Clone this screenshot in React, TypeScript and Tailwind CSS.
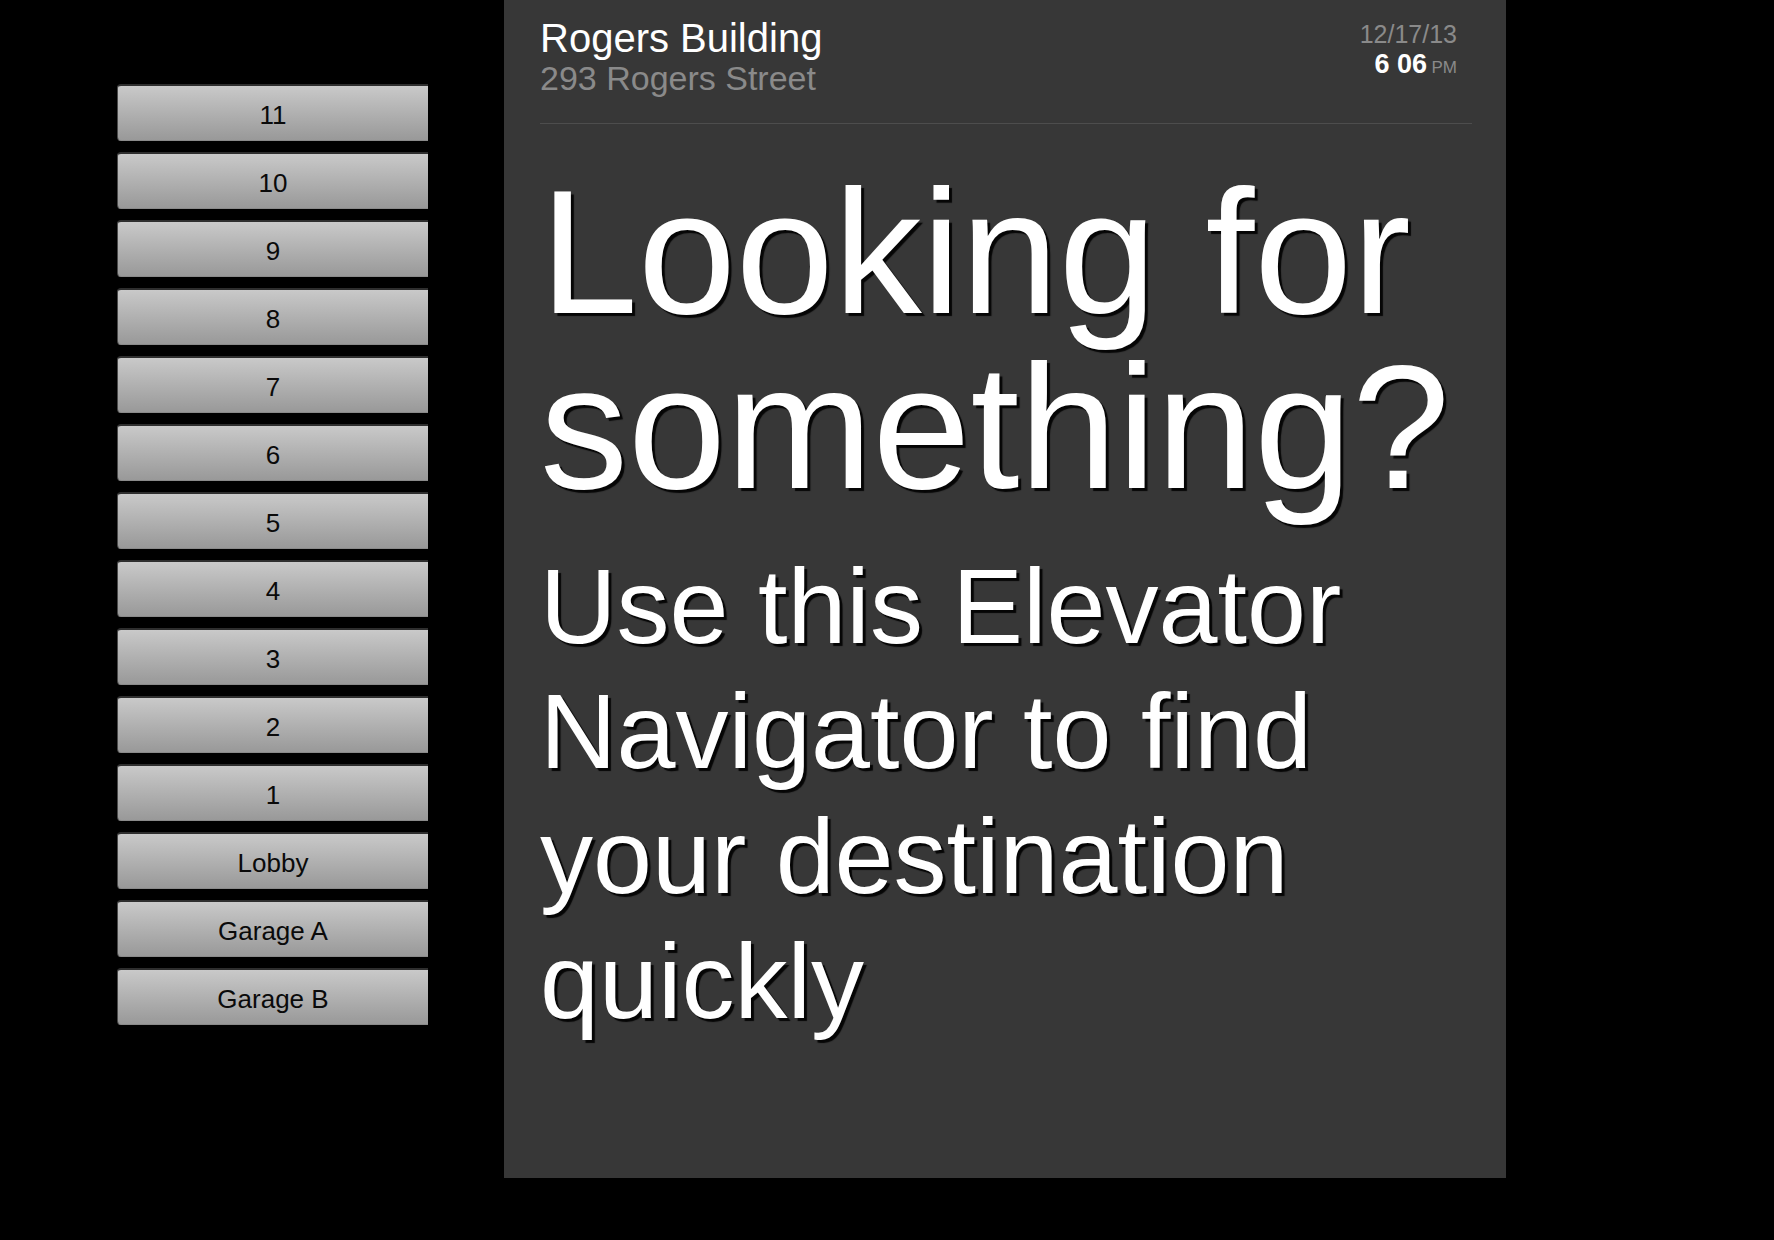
import React from "react";

const floors = ["11", "10", "9", "8", "7", "6", "5", "4", "3", "2", "1", "Lobby", "Garage A", "Garage B"];

const FloorButton: React.FC<{ label: string }> = ({ label }) => {
  return (
    <button className="flex h-[57px] w-[320px] items-center justify-center rounded-l-[4px] border-t-2 border-l border-b border-t-[#2e2e2e] border-l-[#4a4a4a] border-b-[#8a8a8a] bg-gradient-to-b from-[#c9c9c9] to-[#999999] pt-[4px] pr-[9px] text-[26px] text-[#0a0a0a] [font-family:'Liberation_Sans',Arial,sans-serif]">
      {label}
    </button>
  );
};

const App: React.FC = () => {
  return (
    <div className="flex h-[1240px] w-[1774px] overflow-hidden bg-black [font-family:'Liberation_Sans',Arial,sans-serif]">
      {/* Floor buttons */}
      <div className="ml-[117px] mt-[84px] flex w-[311px] flex-col gap-[11px] self-start overflow-hidden">
        {floors.map((f) => (
          <FloorButton key={f} label={f} />
        ))}
      </div>

      {/* Main panel */}
      <div className="ml-[76px] h-[1178px] w-[1002px] bg-[#373737] pl-[36px] pr-[34px]">
        {/* Header */}
        <div className="flex items-start justify-between border-b border-[#4d4d4d] pb-[26px]">
          <div className="pt-[16px]">
            <div className="text-[40px] leading-[44px] text-white">Rogers Building</div>
            <div className="text-[34px] leading-[37px] text-[#8a8a8a]">293 Rogers Street</div>
          </div>
          <div className="mr-[15px] pt-[20px] text-right">
            <div className="text-[25px] leading-[29px] text-[#8a8a8a]">12/17/13</div>
            <div className="leading-[30px]">
              <span className="text-[27px] font-semibold text-white">6 06</span>{" "}
              <span className="text-[17px] text-[#8a8a8a]">PM</span>
            </div>
          </div>
        </div>

        {/* Headline */}
        <h1 className="mt-[41px] text-[176px] leading-[175px] text-white [text-shadow:3px_3px_1px_rgba(0,0,0,0.9)]">
          Looking for
          <br />
          something?
        </h1>
        <p className="mt-[29px] text-[106px] leading-[125px] text-white [text-shadow:3px_3px_1px_rgba(0,0,0,0.9)]">
          Use this Elevator
          <br />
          Navigator to find
          <br />
          your destination
          <br />
          quickly
        </p>
      </div>
    </div>
  );
};

export default App;
